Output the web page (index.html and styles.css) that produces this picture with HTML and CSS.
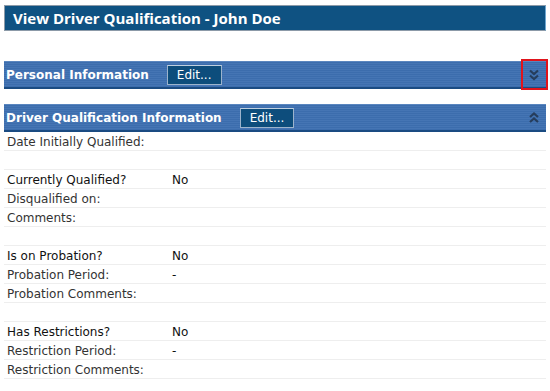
FILE: index.html
```html
<!DOCTYPE html>
<html lang="en">
<head>
    <meta charset="UTF-8">
    <title>View Driver Qualification</title>
    <link rel="stylesheet" href="styles.css">
</head>
<body>
    <div class="page">
        <h1 class="page-title">View Driver Qualification - John Doe</h1>

        <div class="section collapsed">
            <div class="section-bar">
                <span class="section-name">Personal Information</span>
                <button class="edit-btn">Edit...</button>
                <span class="toggle highlighted">
                    <svg width="12" height="12" viewBox="0 0 12 12"><path d="M2 1.5 L6 5 L10 1.5 M2 6.5 L6 10 L10 6.5" fill="none" stroke="#263d5c" stroke-width="2.2"/></svg>
                </span>
            </div>
        </div>

        <div class="section">
            <div class="section-bar">
                <span class="section-name">Driver Qualification Information</span>
                <button class="edit-btn">Edit...</button>
                <span class="toggle">
                    <svg width="12" height="12" viewBox="0 0 12 12"><path d="M2 5 L6 1.5 L10 5 M2 10 L6 6.5 L10 10" fill="none" stroke="#263d5c" stroke-width="2.2"/></svg>
                </span>
            </div>
            <div class="rows">
                <div class="row"><span class="label">Date Initially Qualified:</span><span class="value"></span></div>
                <div class="row blank"></div>
                <div class="row"><span class="label strong">Currently Qualified?</span><span class="value">No</span></div>
                <div class="row"><span class="label">Disqualified on:</span><span class="value"></span></div>
                <div class="row"><span class="label">Comments:</span><span class="value"></span></div>
                <div class="row blank"></div>
                <div class="row"><span class="label strong">Is on Probation?</span><span class="value">No</span></div>
                <div class="row"><span class="label">Probation Period:</span><span class="value">-</span></div>
                <div class="row"><span class="label">Probation Comments:</span><span class="value"></span></div>
                <div class="row blank"></div>
                <div class="row"><span class="label strong">Has Restrictions?</span><span class="value">No</span></div>
                <div class="row"><span class="label">Restriction Period:</span><span class="value">-</span></div>
                <div class="row"><span class="label">Restriction Comments:</span><span class="value"></span></div>
            </div>
        </div>
    </div>
</body>
</html>
```

FILE: styles.css
```css
body {
    margin: 0;
    padding: 0;
    background-color: #fff;
    font-family: "DejaVu Sans", Verdana, sans-serif;
    color: #333;
}
.page {
    padding: 5px 4px 0 4px;
}
.page-title {
    margin: 0 0 30px 0;
    height: 24px;
    line-height: 24px;
    padding: 0 8px;
    background-color: #0f5282;
    border: 1px solid #8c9aa8;
    border-right-color: #6fa6cf;
    color: #fff;
    font-family: "Open Sans", sans-serif;
    font-size: 15px;
    font-weight: 700;
}
.section {
    margin-bottom: 15px;
}
.section-bar {
    position: relative;
    display: flex;
    align-items: center;
    height: 25px;
    padding-left: 2px;
    border-top: 1px solid #5a86bf;
    border-bottom: 2px solid #1a4b82;
    background: repeating-linear-gradient(to bottom, #3c6dad 0, #3c6dad 1px, #4575b4 1px, #4575b4 2px);
}
.section-name {
    color: #fff;
    font-size: 12px;
    font-weight: 700;
    margin-right: 18px;
}
.edit-btn {
    height: 20px;
    padding: 0 9px;
    background-color: #0d4d7c;
    border: 1px solid #9cb3cc;
    border-top-color: #c0d0e0;
    color: #fff;
    font-family: "DejaVu Sans", Verdana, sans-serif;
    font-size: 12px;
    cursor: pointer;
}
.toggle {
    position: relative;
    margin-left: auto;
    width: 24px;
    height: 25px;
    display: flex;
    align-items: center;
    justify-content: center;
}
.toggle.highlighted::after {
    content: "";
    position: absolute;
    left: -1px;
    right: -2px;
    top: -3px;
    bottom: -3px;
    border: 2px solid #e0141c;
}
.rows {
    font-size: 12px;
}
.row {
    display: flex;
    height: 18px;
    line-height: 20px;
    padding-left: 3px;
    border-bottom: 1px solid #eeeeee;
}
.label {
    width: 165px;
    color: #333;
}
.label.strong {
    color: #111;
}
.value {
    color: #111;
}
```
